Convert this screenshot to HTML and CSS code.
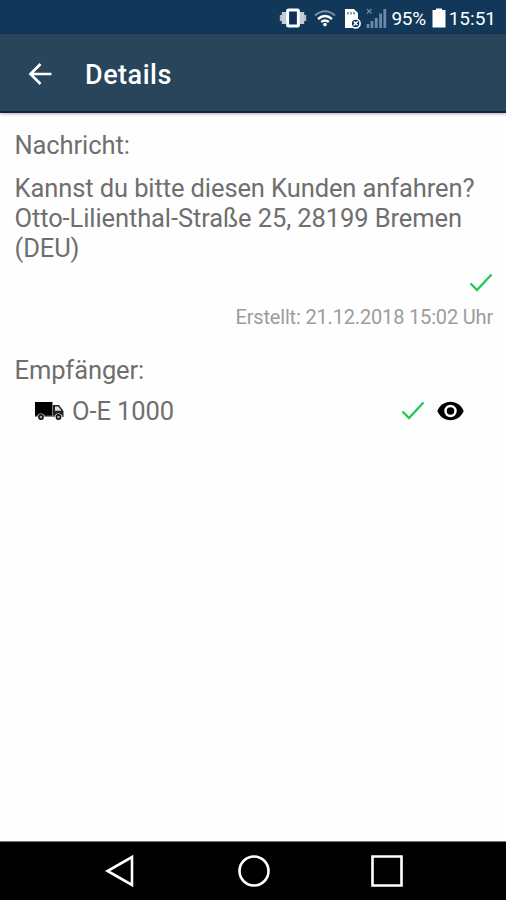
FILE: index.html
```html
<!DOCTYPE html>
<html lang="de">
<head>
  <meta charset="UTF-8" />
  <meta name="viewport" content="width=device-width, initial-scale=1.0" />
  <title>Details</title>
  <link rel="stylesheet" href="styles.css">
</head>
<body>
  <div class="screen">
    <div class="status-bar">
      <svg class="vibrate" width="28" height="20" viewBox="0 0 28 20">
        <path d="M2 7v6M26 7v6" stroke="#b5bfcb" stroke-width="2.4" />
        <path d="M5 4v12M23 4v12" stroke="#c3cbd4" stroke-width="4.4" />
        <rect x="8.6" y="2" width="10.8" height="16" rx="1" fill="#0f3157" stroke="#fff" stroke-width="3" />
      </svg>
      <svg class="wifi" width="22" height="18" viewBox="0 0 22 18" fill="none">
        <path d="M1 6.5Q11-2 21 6.5" stroke="#7890a8" stroke-width="2" />
        <path d="M4 10Q11 4 18 10" stroke="#fff" stroke-width="2.4" />
        <path d="M7.2 13Q11 9.8 14.8 13" stroke="#fff" stroke-width="2.4" />
        <circle cx="11" cy="15.6" r="1.8" fill="#fff" />
      </svg>
      <svg class="sim" width="17" height="21" viewBox="0 0 17 21">
        <path d="M1 20V1h9l4 4v15z" fill="#fff" />
        <path d="M4 4v2.5M7 4v2.5M10 4v2.5" stroke="#4c6480" stroke-width="1.2" />
        <circle cx="11.6" cy="15.4" r="4.5" fill="#0f3157" stroke="#fff" stroke-width="1.6" />
        <path d="M9.5 17.5l4.2-4.2M9.8 13.5l3.6 3.8" stroke="#fff" stroke-width="1.6" />
      </svg>
      <svg class="signal" width="21" height="21" viewBox="0 0 21 21">
        <path d="M1 1l4.5 4.5M5.5 1L1 5.5" stroke="#6d89a3" stroke-width="1.3" />
        <path d="M2 20v-4M6 20v-7M10.3 20V10M14.6 20V5.5M18.8 20V1" stroke="#6d89a3" stroke-width="2.8" />
      </svg>
      <span class="percent">95%</span>
      <svg class="battery" width="14" height="20" viewBox="0 0 14 20">
        <path d="M4 .5h6V2h3.5v17.5H.5V2H4z" fill="#fff" />
      </svg>
      <span class="clock">15:51</span>
    </div>

    <header class="app-bar">
      <svg class="back" width="24" height="24" viewBox="0 0 24 24" fill="none" stroke="#fff" stroke-width="2.7">
        <path d="M23.4 12H3M12.5 2L2.5 12l10 10" />
      </svg>
      <h1>Details</h1>
    </header>

    <main class="content">
      <h2 class="label">Nachricht:</h2>
      <p class="message">Kannst du bitte diesen Kunden anfahren?<br>Otto-Lilienthal-Straße 25, 28199 Bremen<br>(DEU)</p>
      <div class="message-status">
        <svg class="check" width="24" height="20" viewBox="0 0 24 20">
          <path d="M1.5 10.5L8 17 22.5 1.5" />
        </svg>
      </div>
      <p class="created">Erstellt: 21.12.2018 15:02 Uhr</p>

      <h2 class="label">Empfänger:</h2>
      <div class="recipient">
        <svg class="truck" width="29" height="20" viewBox="0 0 29 20">
          <path d="M0 1h17.5v14.5H0z" />
          <path d="M18 4h6l4.5 6v6H18z" fill="#222" />
          <path d="M20 5.5h3.4l3 4.3H20z" fill="#ddd" />
          <path d="M0 15.2h28.5" stroke="#888" />
          <circle cx="6" cy="16" r="3.6" fill="#fff" />
          <circle cx="23.5" cy="16" r="3.6" fill="#fff" />
          <circle cx="6" cy="16" r="2.1" stroke="#111" stroke-width="1.6" fill="#aaa" />
          <circle cx="23.5" cy="16" r="2.1" stroke="#111" stroke-width="1.6" fill="#aaa" />
        </svg>
        <span class="name">O-E 1000</span>
        <svg class="check" width="24" height="20" viewBox="0 0 24 20">
          <path d="M1.5 10.5L8 17 22.5 1.5" />
        </svg>
        <svg class="eye" width="27" height="20" viewBox="0 0 27 20">
          <path d="M.3 10C2.7 4.3 7.6.8 13.5.8S24.3 4.3 26.7 10C24.3 15.7 19.4 19.2 13.5 19.2S2.7 15.7.3 10z" />
          <circle cx="13.5" cy="10" r="5" fill="none" stroke="#fff" stroke-width="2.5" />
        </svg>
      </div>
    </main>

    <nav class="nav-bar">
      <svg width="32" height="32" viewBox="0 0 32 32">
        <path d="M28 2v28L3.5 16z" />
      </svg>
      <svg width="32" height="32" viewBox="0 0 32 32">
        <circle cx="16" cy="16" r="14.5" />
      </svg>
      <svg width="32" height="32" viewBox="0 0 32 32">
        <path d="M1.5 1.5h29v29h-29z" />
      </svg>
    </nav>
  </div>
</body>
</html>
```

FILE: styles.css
```css
* {
  box-sizing: border-box;
}

body {
  margin: 0;
  background-color: #fefefe;
  font-family: Roboto, sans-serif;
}

h1, h2, p {
  margin: 0;
}

svg {
  display: block;
  flex-shrink: 0;
}

.screen {
  display: flex;
  flex-direction: column;
  height: 900px;
}

.status-bar {
  display: flex;
  align-items: center;
  justify-content: flex-end;
  height: 34px;
  padding: 2px 10px 0 0;
  background-color: #113759;
  color: #fff;
  font-size: 19px;
}

.wifi {
  margin-left: 7px;
}

.sim {
  margin-left: 8px;
}

.signal {
  margin-left: 5px;
}

.percent {
  margin-left: 5px;
  letter-spacing: -0.4px;
}

.battery {
  margin-left: 6px;
}

.clock {
  margin-left: 3px;
}

.app-bar {
  display: flex;
  align-items: center;
  height: 79px;
  padding: 3px 28px 0;
  background-color: #29455b;
  border-bottom: 2px solid #1b1d51;
  box-shadow: 0 1px 3px rgba(0, 0, 0, 0.3);
}

.app-bar h1 {
  margin: 2px 0 0 33px;
  color: #fff;
  font-size: 27px;
  font-weight: 500;
  letter-spacing: 0.5px;
}

.content {
  flex: 1;
  padding: 17px 13px 0 14.5px;
  color: #6f6f6f;
  font-size: 25.5px;
  letter-spacing: -0.1px;
  line-height: 30px;
}

.label {
  font-size: inherit;
  font-weight: 400;
}

.message {
  margin-top: 13px;
}

.message-status {
  display: flex;
  justify-content: flex-end;
  margin-top: 10px;
}

.check {
  fill: none;
  stroke: #25c95a;
  stroke-width: 2.4;
}

.created {
  margin: 13px 0 26px;
  color: #9c9c9c;
  font-size: 20px;
  letter-spacing: -0.17px;
  line-height: 23px;
  text-align: right;
}

.recipient {
  display: flex;
  align-items: center;
  margin-top: 11px;
  padding: 0 29px 0 20.5px;
}

.name {
  flex: 1;
  margin-left: 8px;
}

.eye {
  margin-left: 12px;
}

.nav-bar {
  display: flex;
  align-items: center;
  justify-content: space-between;
  height: 59px;
  padding: 0 103px 0 104px;
  background-color: #000;
  border-top: 1px solid #777;
}

.nav-bar svg {
  fill: none;
  stroke: #fff;
  stroke-width: 2.6;
}
```
